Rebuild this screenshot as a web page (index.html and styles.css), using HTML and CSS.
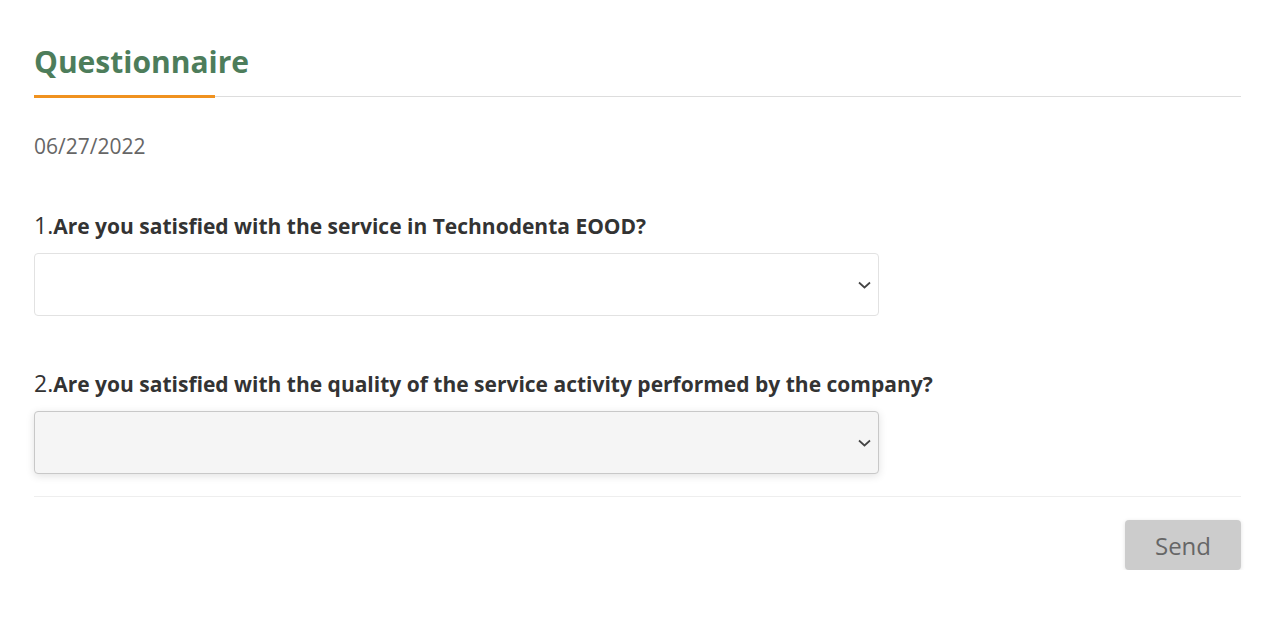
FILE: index.html
```html
<!DOCTYPE html>
<html>
<head>
<meta charset="utf-8">
<link rel="stylesheet" href="styles.css">
</head>
<body>
<div class="page">
  <div class="header">
    <h1 class="title">Questionnaire</h1>
  </div>
  <div class="date">06/27/2022</div>
  <div class="question">
    <div class="q-label"><span class="q-num">1.</span><span class="q-text">Are you satisfied with the service in Technodenta EOOD?</span></div>
    <div class="select">
      <svg class="chev" width="13" height="8" viewBox="0 0 13 8"><path d="M1 1.5 L6.5 6.5 L12 1.5" fill="none" stroke="#444" stroke-width="1.7"/></svg>
    </div>
  </div>
  <div class="question">
    <div class="q-label"><span class="q-num">2.</span><span class="q-text">Are you satisfied with the quality of the service activity performed by the company?</span></div>
    <div class="select select-focus">
      <svg class="chev" width="13" height="8" viewBox="0 0 13 8"><path d="M1 1.5 L6.5 6.5 L12 1.5" fill="none" stroke="#444" stroke-width="1.7"/></svg>
    </div>
  </div>
  <div class="divider"></div>
  <div class="actions">
    <button class="send">Send</button>
  </div>
</div>
</body>
</html>
```
FILE: styles.css
```css
html, body {
  margin: 0;
  padding: 0;
  background: #fff;
  font-family: "Open Sans", "Liberation Sans", sans-serif;
  color: #333;
}
.page {
  padding: 40px 29px 0 34px;
}
.header {
  border-bottom: 1px solid #ddd;
}
.title {
  margin: 0;
  display: inline-block;
  font-size: 30px;
  font-weight: 700;
  color: #4d7d5b;
  line-height: 44px;
  padding-bottom: 11px;
  width: 181px;
  border-bottom: 3px solid #f0921f;
  margin-bottom: -2px;
  white-space: nowrap;
}
.date {
  margin-top: 34px;
  font-size: 21px;
  color: #666;
  line-height: 30px;
}
.question {
  margin-top: 49px;
}
.question + .question {
  margin-top: 52px;
}
.q-label {
  line-height: 30px;
  color: #333;
}
.q-num {
  font-size: 23px;
  font-weight: 400;
}
.q-text {
  font-size: 21px;
  font-weight: 700;
}
.select {
  margin-top: 10px;
  width: 845px;
  height: 63px;
  border: 1px solid #e2e2e2;
  border-radius: 4px;
  background: #fff;
  display: flex;
  align-items: center;
  justify-content: flex-end;
  padding-right: 7px;
  box-sizing: border-box;
}
.select-focus {
  background: #f5f5f5;
  border-color: #c8c8c8;
  box-shadow: 0 2px 8px rgba(0,0,0,0.12);
}
.divider {
  margin-top: 22px;
  border-top: 1px solid #eee;
}
.actions {
  display: flex;
  justify-content: flex-end;
  margin-top: 23px;
}
.send {
  width: 116px;
  height: 50px;
  border: none;
  border-radius: 4px;
  background: #cccccc;
  color: #666;
  font-family: "Open Sans", "Liberation Sans", sans-serif;
  font-size: 24px;
  box-shadow: 0 1px 4px rgba(0,0,0,0.12);
}
```
